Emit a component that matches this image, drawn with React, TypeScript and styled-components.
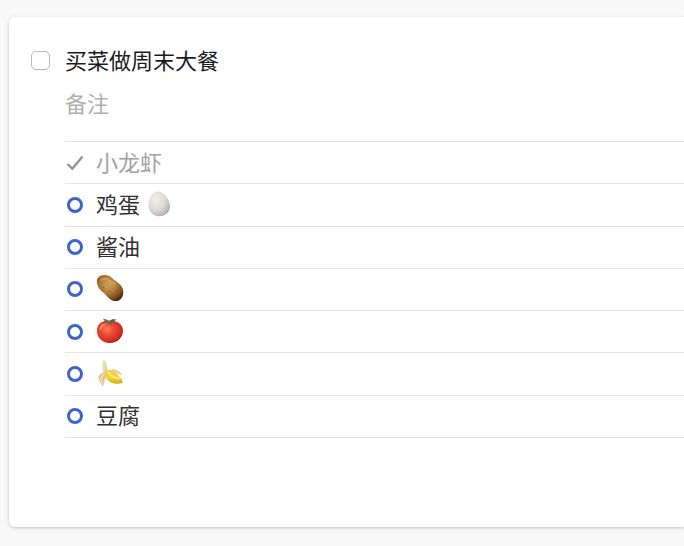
import React, { useState } from 'react';
import styled, { createGlobalStyle } from 'styled-components';

const GlobalStyle = createGlobalStyle`
  * { box-sizing: border-box; }
  body {
    margin: 0;
    background: #f9f9f9;
    font-family: "Liberation Sans", "Noto Sans CJK SC", sans-serif;
    color: #303030;
  }
`;

const Page = styled.main`
  padding: 17px 0 19px 9px;
  overflow: hidden;
`;

const Card = styled.section`
  padding: 28px 0 89px 22px;
  background: #ffffff;
  border-radius: 6px 0 0 6px;
  box-shadow: 0 1px 3px rgba(0, 0, 0, 0.18), 0 1px 8px rgba(0, 0, 0, 0.06);
`;

const Header = styled.header`
  display: grid;
  grid-template-columns: 19px 1fr;
  column-gap: 15px;
  align-items: center;
`;

const TaskCheckbox = styled.input`
  appearance: none;
  width: 19px;
  height: 19px;
  margin: 0 0 4px;
  border: 1px solid #b9b9b9;
  border-radius: 5px;
  background: #ffffff;
  &:checked { background: #3a67c8; }
`;

const Title = styled.label`
  font-size: 22px;
  line-height: 34px;
  color: #1c1c1c;
`;

const Notes = styled.input`
  grid-column: 2;
  width: 100%;
  height: 32px;
  margin-top: 10px;
  padding: 0;
  border: 0;
  outline: 0;
  background: transparent;
  font: inherit;
  font-size: 22px;
  color: #303030;
  &::placeholder { color: #b0b0b0; opacity: 1; }
`;

const Checklist = styled.ul`
  display: grid;
  grid-auto-rows: 1fr;
  min-height: 297px;
  margin: 20px 0 0 34px;
  padding: 0;
  list-style: none;
  border-top: 1px solid #e4e4e4;
`;

const Row = styled.li`
  display: flex;
  align-items: center;
  border-bottom: 1px solid #e4e4e4;
`;

const RowLabel = styled.label<{ $done: boolean }>`
  display: flex;
  align-items: center;
  gap: 11px;
  font-size: 22px;
  line-height: 32px;
  color: ${(p) => (p.$done ? '#a2a2a2' : '#303030')};
`;

const Toggle = styled.span`
  display: grid;
  place-items: center;
  width: 20px;
  height: 20px;
  > * { grid-area: 1 / 1; }
`;

const RoundCheckbox = styled.input`
  appearance: none;
  width: 16px;
  height: 16px;
  margin: 0;
  border: 3px solid #3d66c4;
  border-radius: 50%;
  &:checked { border-color: transparent; }
`;

const CheckIcon = styled.svg`
  width: 20px;
  height: 20px;
  pointer-events: none;
`;

const ItemContent = styled.span`
  display: flex;
  align-items: center;
  gap: 5px;
`;

const ItemText = styled.span`
  padding-top: 2px;
`;

const Picture = styled.svg`
  width: 28px;
  height: 28px;
  margin-bottom: 2px;
`;

const Egg = () => (
  <Picture viewBox="0 0 28 28" role="img" aria-label="鸡蛋">
    <defs>
      <radialGradient id="egg-shell" cx="36%" cy="34%" r="74%">
        <stop offset="0" stopColor="#f1efea" />
        <stop offset="0.55" stopColor="#dedbd4" />
        <stop offset="0.85" stopColor="#c3beb5" />
        <stop offset="1" stopColor="#9f9a92" />
      </radialGradient>
    </defs>
    <path d="M12.5 1.5C7 1.8 3.3 9 3.4 15.5C3.6 22 8.5 26.3 14.5 26.2C20.8 26 25.2 21.5 24.9 15.5C24.4 9.4 18.5 1.2 12.5 1.5Z" fill="url(#egg-shell)" />
  </Picture>
);

const Potato = () => (
  <Picture viewBox="0 0 28 28" role="img" aria-label="土豆">
    <defs>
      <radialGradient id="potato-skin" cx="44%" cy="36%" r="66%">
        <stop offset="0" stopColor="#d4a558" />
        <stop offset="0.45" stopColor="#b27e3a" />
        <stop offset="0.8" stopColor="#855322" />
        <stop offset="1" stopColor="#4c2c10" />
      </radialGradient>
    </defs>
    <path d="M1 5.5C2.4 1.6 8 .2 12.7 1.7C15.1 2.5 16.4 4.6 19.2 6.5C24 9.8 27.3 13 27.3 18.2C27.3 23.6 23.8 27.7 18.8 27.1C13.4 26.4 11.7 22.4 8.3 19.3C4.3 16 2.1 14.2 1.3 10.4C.9 8.6.6 7 1 5.5Z" fill="url(#potato-skin)" />
    <path d="M5 6Q9 3.6 12.5 6T19 10" fill="none" stroke="#e5bd78" strokeWidth="2" strokeLinecap="round" opacity=".4" />
    <path d="M6 13l2 1M13 17l2 1M20 16l1 2M16 23l2 .5M11 10l1 1" stroke="#684016" strokeWidth="1" strokeLinecap="round" opacity=".5" />
  </Picture>
);

const Tomato = () => (
  <Picture viewBox="0 0 28 28" role="img" aria-label="番茄">
    <defs>
      <radialGradient id="tomato-skin" cx="39%" cy="38%" r="66%">
        <stop offset="0" stopColor="#f5805f" />
        <stop offset="0.4" stopColor="#e84a34" />
        <stop offset="0.8" stopColor="#d32e21" />
        <stop offset="1" stopColor="#a51f18" />
      </radialGradient>
    </defs>
    <path d="M1 14C.9 8.1 4.8 4.2 9.6 4.3C12 4.2 13 5 14.8 4.5C21 2.8 26.8 7.4 27 13.5C27.2 20.8 21 26 13.7 25.9C6.5 25.8 1.1 20.8 1 14Z" fill="url(#tomato-skin)" />
    <path d="M4.3 12Q5.2 8.4 8.5 7.4" fill="none" stroke="#ffb097" strokeWidth="2" strokeLinecap="round" opacity=".6" />
    <path d="M13.4 6.4L9.8 4.7L5.6 6.5L8.8 3.7L6.5 1.5L11.6 3.1L13.3 3.8L16.9 2.1L20.7 2.8L18 4.3L20.3 6.2L15.8 5.4L14.2 8Z" fill="#53663a" />
    <path d="M13.6 4.7Q12 3.4 9.2 2.7" fill="none" stroke="#8a995c" strokeWidth="1" />
  </Picture>
);

const Banana = () => (
  <Picture viewBox="0 0 28 28" role="img" aria-label="香蕉">
    <defs>
      <linearGradient id="banana-peel" x1="0" y1="0" x2="0" y2="1">
        <stop offset="0" stopColor="#eccd52" />
        <stop offset="0.55" stopColor="#f3d52e" />
        <stop offset="1" stopColor="#cfad13" />
      </linearGradient>
      <linearGradient id="banana-flesh" x1="0" y1="0" x2="1" y2="0">
        <stop offset="0" stopColor="#f3e7c5" />
        <stop offset="1" stopColor="#dfc794" />
      </linearGradient>
    </defs>
    <path d="M6.4 2.2Q7.5.4 9.1 2.2C11.1 5.5 11.3 10.2 11.5 15L7.7 16.4C6.3 11 5.5 6 6.4 2.2Z" fill="url(#banana-flesh)" />
    <path d="M8.6 13.6Q4.1 14.5 2.3 17.8C3.2 21.1 4.2 24.3 6.6 27Q9.1 23.6 8.8 20.2L11.4 17Z" fill="#d9c298" />
    <path d="M8.5 15.2Q5.7 16.6 5.2 19.2L6.8 24.7" fill="none" stroke="#f1e4c4" strokeWidth="1.5" />
    <path d="M9.8 12.2C13 9.8 18.3 11 21.6 14.6Q22.5 17.5 24 18.2Q27.4 20 25.8 24.1C20.5 25.8 13.8 24.4 10.2 19.4C8.1 16.5 7.9 14 9.8 12.2Z" fill="url(#banana-peel)" />
    <path d="M12 13Q15.5 18.8 23.6 19.8" fill="none" stroke="#fff08b" strokeWidth="1.5" />
    <path d="M15.5 11.4Q20.2 10.5 25 15.6" fill="none" stroke="#dfc9a0" strokeWidth="2" />
    <path d="M24.8 23.1l1.3.5" stroke="#a08a2c" strokeWidth="1.5" />
  </Picture>
);

type Item = { id: string; text?: string; picture?: React.ReactNode };

const items: Item[] = [
  { id: 'crayfish', text: '小龙虾' },
  { id: 'eggs', text: '鸡蛋', picture: <Egg /> },
  { id: 'sauce', text: '酱油' },
  { id: 'potato', picture: <Potato /> },
  { id: 'tomato', picture: <Tomato /> },
  { id: 'banana', picture: <Banana /> },
  { id: 'tofu', text: '豆腐' },
];

export default function App() {
  const [done, setDone] = useState<Record<string, boolean>>({ crayfish: true });
  return (
    <>
      <GlobalStyle />
      <Page>
        <Card>
          <Header>
            <TaskCheckbox id="task" type="checkbox" />
            <Title htmlFor="task">买菜做周末大餐</Title>
            <Notes type="text" placeholder="备注" aria-label="备注" />
          </Header>
          <Checklist>
            {items.map((item) => (
              <Row key={item.id}>
                <RowLabel htmlFor={item.id} $done={!!done[item.id]}>
                  <Toggle>
                    <RoundCheckbox
                      id={item.id}
                      type="checkbox"
                      checked={!!done[item.id]}
                      onChange={(e) => setDone({ ...done, [item.id]: e.target.checked })}
                    />
                    {done[item.id] && (
                      <CheckIcon viewBox="0 0 20 20" aria-hidden="true">
                        <path d="M2.5 11L7.3 15.8L17.5 3.5" fill="none" stroke="#969696" strokeWidth="2.4" />
                      </CheckIcon>
                    )}
                  </Toggle>
                  <ItemContent>
                    {item.text && <ItemText>{item.text}</ItemText>}
                    {item.picture}
                  </ItemContent>
                </RowLabel>
              </Row>
            ))}
          </Checklist>
        </Card>
      </Page>
    </>
  );
}
